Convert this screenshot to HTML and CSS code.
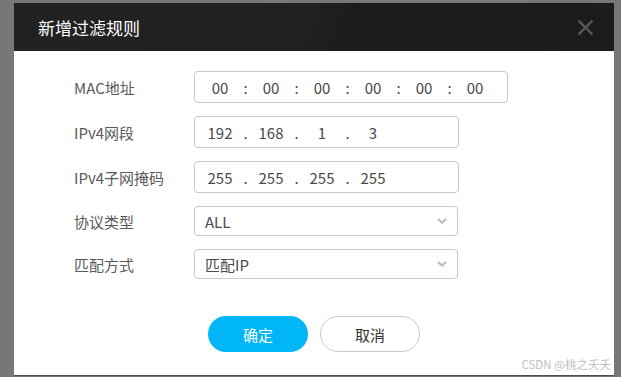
FILE: index.html
```html
<!DOCTYPE html>
<html lang="zh-CN">
<head>
    <meta charset="UTF-8">
    <meta name="viewport" content="width=device-width, initial-scale=1.0">
    <title>新增过滤规则</title>
    <link rel="stylesheet" href="styles.css">
</head>
<body>
    <div class="dialog">
        <div class="dialog-head">
            <span class="title">新增过滤规则</span>
            <span class="close">
                <svg width="17" height="17" viewBox="0 0 17 17">
                    <path d="M1.5 1.5 L15.5 15.5 M15.5 1.5 L1.5 15.5" stroke="#5a5a5a" stroke-width="2.4" fill="none"/>
                </svg>
            </span>
        </div>

        <form class="dialog-body" id="ruleForm">
            <div class="row">
                <label>MAC地址</label>
                <div class="seg-box mac">
                    <input class="seg" value="00"><span class="sep">:</span>
                    <input class="seg" value="00"><span class="sep">:</span>
                    <input class="seg" value="00"><span class="sep">:</span>
                    <input class="seg" value="00"><span class="sep">:</span>
                    <input class="seg" value="00"><span class="sep">:</span>
                    <input class="seg" value="00">
                </div>
            </div>
            <div class="row">
                <label>IPv4网段</label>
                <div class="seg-box">
                    <input class="seg" value="192"><span class="sep">.</span>
                    <input class="seg" value="168"><span class="sep">.</span>
                    <input class="seg" value="1"><span class="sep">.</span>
                    <input class="seg" value="3">
                </div>
            </div>
            <div class="row">
                <label>IPv4子网掩码</label>
                <div class="seg-box">
                    <input class="seg" value="255"><span class="sep">.</span>
                    <input class="seg" value="255"><span class="sep">.</span>
                    <input class="seg" value="255"><span class="sep">.</span>
                    <input class="seg" value="255">
                </div>
            </div>
            <div class="row row-select">
                <label>协议类型</label>
                <div class="select">
                    <span>ALL</span>
                    <svg width="10" height="6" viewBox="0 0 10 6"><path d="M1 1 L5 4.6 L9 1" stroke="#bdbdbd" stroke-width="2.2" fill="none"/></svg>
                </div>
            </div>
            <div class="row row-select">
                <label>匹配方式</label>
                <div class="select">
                    <span>匹配IP</span>
                    <svg width="10" height="6" viewBox="0 0 10 6"><path d="M1 1 L5 4.6 L9 1" stroke="#bdbdbd" stroke-width="2.2" fill="none"/></svg>
                </div>
            </div>
        </form>

        <div class="actions">
            <button type="button" class="btn btn-ok">确定</button>
            <button type="button" class="btn btn-cancel">取消</button>
        </div>

        <div class="watermark">CSDN @桃之夭夭</div>
    </div>
</body>
</html>
```

FILE: styles.css
```css
body, html {
    margin: 0;
    padding: 0;
    font-family: "Noto Sans CJK SC", "Noto Sans", sans-serif;
    background: #777777;
}

body {
    padding: 3px 0 0 14px;
    height: 377px;
    box-sizing: border-box;
    overflow: hidden;
}

.dialog {
    position: relative;
    width: 600px;
    height: 372px;
    background: #FFFFFF;
    box-shadow: 0 1px 0 #4e4e4e;
}

.dialog-head {
    height: 48px;
    display: flex;
    align-items: center;
    justify-content: space-between;
    padding: 0 20px 0 24px;
    background: linear-gradient(112deg, #222222 0%, #202020 50%, #1b1b1b 56%, #1c1c1c 100%);
}

.title {
    color: #FFFFFF;
    font-size: 17px;
}

.close {
    display: flex;
    width: 17px;
    height: 17px;
    margin-top: 1px;
}

.dialog-body {
    padding: 20px 0 0 60px;
}

.row {
    display: flex;
    align-items: center;
    height: 32px;
    margin-bottom: 13px;
}

.row label {
    width: 120px;
    font-size: 15px;
    color: #5a5a5a;
}

.seg-box {
    box-sizing: border-box;
    width: 265px;
    height: 32px;
    display: flex;
    align-items: center;
    padding-left: 8px;
    border: 1px solid #c8c8c8;
    border-radius: 4px;
}

.seg-box.mac {
    width: 314px;
}

.seg {
    width: 34px;
    padding: 0;
    border: none;
    outline: none;
    background: transparent;
    text-align: center;
    font-family: "Noto Sans CJK SC", sans-serif;
    font-size: 15px;
    color: #4a4a4a;
}

.sep {
    width: 17px;
    text-align: center;
    font-size: 15px;
    color: #4a4a4a;
}

.row-select {
    height: 30px;
}

.select {
    box-sizing: border-box;
    width: 264px;
    height: 30px;
    display: flex;
    align-items: center;
    justify-content: space-between;
    padding: 0 10px;
    border: 1px solid #c8c8c8;
    border-radius: 4px;
    font-size: 15px;
    color: #4a4a4a;
}

.actions {
    display: flex;
    justify-content: center;
    gap: 12px;
    margin-top: 37px;
}

.btn {
    width: 100px;
    height: 36px;
    border-radius: 18px;
    font-family: "Noto Sans CJK SC", sans-serif;
    font-size: 15px;
    cursor: pointer;
}

.btn-ok {
    background: #00b6f7;
    border: none;
    color: #FFFFFF;
}

.btn-cancel {
    background: #FFFFFF;
    border: 1px solid #c8c8c8;
    color: #333333;
}

/* CSDN watermark */
.watermark {
    position: absolute;
    right: 3px;
    bottom: 3px;
    font-size: 11.5px;
    color: #c0c0c0;
}
```
